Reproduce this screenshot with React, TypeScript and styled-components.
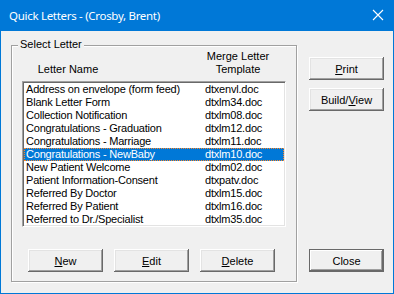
import styled, { createGlobalStyle } from 'styled-components'

const letters = [
  { name: 'Address on envelope (form feed)', file: 'dtxenvl.doc' },
  { name: 'Blank Letter Form', file: 'dtxlm34.doc' },
  { name: 'Collection Notification', file: 'dtxlm08.doc' },
  { name: 'Congratulations - Graduation', file: 'dtxlm12.doc' },
  { name: 'Congratulations - Marriage', file: 'dtxlm11.doc' },
  { name: 'Congratulations - NewBaby', file: 'dtxlm10.doc' },
  { name: 'New Patient Welcome', file: 'dtxlm02.doc' },
  { name: 'Patient Information-Consent', file: 'dtxpatv.doc' },
  { name: 'Referred By Doctor', file: 'dtxlm15.doc' },
  { name: 'Referred By Patient', file: 'dtxlm16.doc' },
  { name: 'Referred to Dr./Specialist', file: 'dtxlm35.doc' },
]

const selected = 5

const GlobalStyle = createGlobalStyle`
  html, body { margin: 0; padding: 0; background: #ffffff; }
  * { box-sizing: border-box; }
`

function App() {
  return (
    <>
      <GlobalStyle />
      <Window>
        <TitleBar>
          <Title>Quick Letters - (Crosby, Brent)</Title>
          <CloseIcon width={12} height={12} viewBox="0 0 12 12">
            <path d="M1 1 L11 11 M11 1 L1 11" stroke="#ffffff" strokeWidth={1.1} fill="none" />
          </CloseIcon>
        </TitleBar>
        <Body>
          <Group>
            <Legend>Select Letter</Legend>
            <Headers>
              <HeaderName>Letter Name</HeaderName>
              <HeaderFile>Merge Letter<br />Template</HeaderFile>
            </Headers>
            <ListBox>
              {letters.map((l, i) => (
                <Row key={l.file} $active={i === selected}>
                  <NameCell>{l.name}</NameCell>
                  <span>{l.file}</span>
                </Row>
              ))}
            </ListBox>
            <ButtonRow>
              <Button><u>N</u>ew</Button>
              <Button><u>E</u>dit</Button>
              <Button><u>D</u>elete</Button>
            </ButtonRow>
          </Group>
          <Side>
            <Button><u>P</u>rint</Button>
            <Button>Build/<u>V</u>iew</Button>
            <Spacer />
            <Button $default>Close</Button>
          </Side>
        </Body>
      </Window>
    </>
  )
}

const Window = styled.div`
  width: 394px;
  height: 294px;
  background: #f0f0f0;
  border: 1px solid #0078d7;
  border-top: none;
  display: flex;
  flex-direction: column;
  font-family: "Liberation Sans", Arial, sans-serif;
  font-size: 11px;
  color: #000000;
`
const TitleBar = styled.div`
  height: 31px;
  margin: 0 -1px;
  background: #0078d7;
  display: flex;
  align-items: center;
  justify-content: space-between;
  padding: 0 10px 1px 9px;
`
const Title = styled.div`
  font-family: "Noto Sans", "Segoe UI", sans-serif;
  font-size: 11.5px;
  letter-spacing: -0.3px;
  color: #ffffff;
`
const CloseIcon = styled.svg`
  display: block;
`
const Body = styled.div`
  flex: 1;
  display: flex;
  padding: 14px 0 0 10px;
`
const Group = styled.div`
  position: relative;
  width: 286px;
  height: 237px;
  border: 1px solid #a0a0a0;
  box-shadow: inset 1px 1px 0 #ffffff, 1px 1px 0 #ffffff;
  padding: 4px 0 0 10px;
`
const Legend = styled.span`
  position: absolute;
  top: -8px;
  left: 6px;
  padding: 0 2px;
  background: #f0f0f0;
  line-height: 13px;
`
const Headers = styled.div`
  width: 264px;
  display: flex;
  justify-content: space-between;
  align-items: flex-end;
  line-height: 13px;
`
const HeaderName = styled.div`
  width: 92px;
  text-align: center;
`
const HeaderFile = styled.div`
  width: 96px;
  text-align: center;
`
const ListBox = styled.div`
  margin-top: 5px;
  width: 264px;
  height: 146px;
  background: #ffffff;
  overflow: hidden;
  border-top: 1px solid #a0a0a0;
  border-left: 1px solid #a0a0a0;
  border-bottom: 1px solid #ffffff;
  border-right: 1px solid #ffffff;
  box-shadow: inset 1px 1px 0 #696969, inset -1px -1px 0 #e3e3e3;
  padding: 1px;
`
const Row = styled.div<{ $active?: boolean }>`
  display: flex;
  height: 13px;
  line-height: 13px;
  padding-left: 2px;
  white-space: nowrap;
  letter-spacing: -0.2px;
  background: ${p => (p.$active ? '#0078d7' : 'transparent')};
  color: ${p => (p.$active ? '#ffffff' : '#000000')};
  outline: ${p => (p.$active ? '1px dotted #ff8728' : 'none')};
  outline-offset: -1px;
`
const NameCell = styled.span`
  width: 179px;
  flex-shrink: 0;
`
const ButtonRow = styled.div`
  display: flex;
  gap: 11px;
  margin-top: 22px;
  padding-left: 6px;
`
const Button = styled.button<{ $default?: boolean }>`
  width: 75px;
  height: 23px;
  flex-shrink: 0;
  border: none;
  padding: 0;
  background: #f0f0f0;
  font-family: "Liberation Sans", Arial, sans-serif;
  font-size: 11px;
  font-weight: 400;
  color: #000000;
  box-shadow: ${p =>
    p.$default
      ? 'inset 0 0 0 1px #696969, inset -2px -2px 0 #696969, inset 2px 2px 0 #ffffff, inset -3px -3px 0 #a0a0a0'
      : 'inset -1px -1px 0 #696969, inset 1px 1px 0 #ffffff, inset -2px -2px 0 #a0a0a0, inset 2px 2px 0 #e3e3e3'};
`
const Side = styled.div`
  display: flex;
  flex-direction: column;
  gap: 8px;
  margin-left: 12px;
  padding: 12px 0 10px;
  height: 237px;
`
const Spacer = styled.div`
  flex: 1;
`

export default App
